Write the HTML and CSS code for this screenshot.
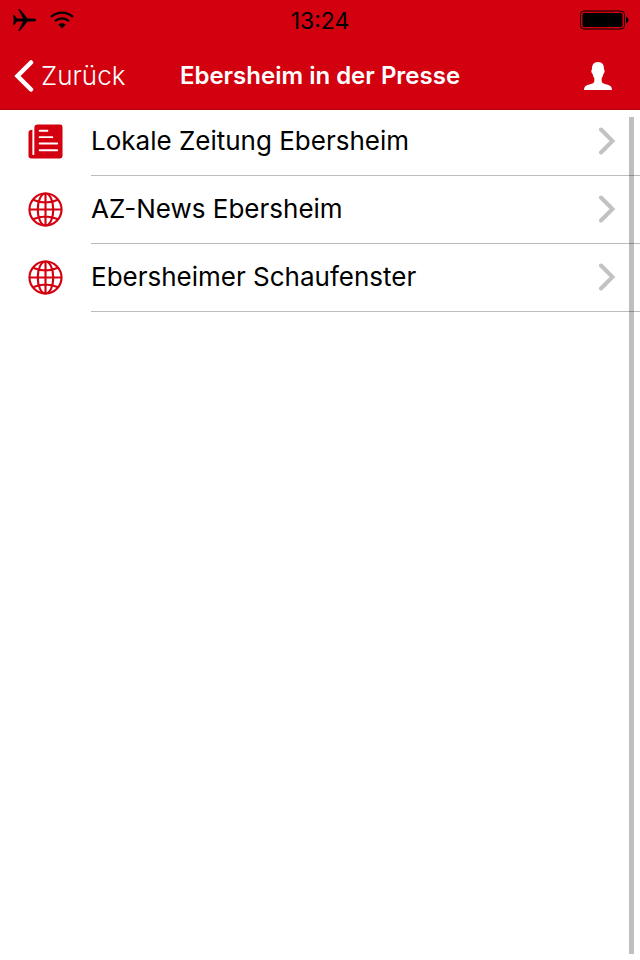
FILE: index.html
```html
<!DOCTYPE html>
<html lang="de">
<head>
<meta charset="utf-8">
<meta name="viewport" content="width=device-width, initial-scale=1">
<title>Ebersheim in der Presse</title>
<link rel="stylesheet" href="styles.css">
</head>
<body>
<svg class="sprite" aria-hidden="true">
  <symbol id="globe" viewBox="0 0 36 36">
    <g fill="none" stroke="currentColor" stroke-width="2.200">
      <circle cx="18" cy="18" r="16.500"/>
      <ellipse cx="18" cy="18" rx="8" ry="16.500"/>
      <path d="M18 2v32M2 18h32M5 8Q18 13.500 31 8M5 28Q18 22.500 31 28"/>
    </g>
  </symbol>
  <symbol id="chevron" viewBox="0 0 18 28">
    <path d="M3 2.500L14.500 14 3 25.500" fill="none" stroke="currentColor" stroke-width="4" stroke-linecap="round" stroke-linejoin="miter"/>
  </symbol>
</svg>
<header class="header">
  <div class="status">
    <div class="signals">
      <svg width="26" height="24" viewBox="0 0 26 24" role="img" aria-label="Flugmodus"><path d="M1 7h1.200L5 10.600L11 10.400L6.300 1H7.800L15.500 10.400h6.500q2.200.3 2.200 1.600t-2.200 1.600h-6.500L7.800 23H6.300L11 13.600l-6-.2L2.200 17H1l.8-5z"/></svg>
      <svg width="24" height="18" viewBox="0 0 24 18" role="img" aria-label="WLAN"><path d="M1 6Q6 1.700 12 1.700T23 6M5 10.200Q8 7.400 12 7.400T19 10.200" fill="none" stroke="#000" stroke-width="2.200"/><path d="M8.300 13.600Q12 11 15.700 13.600L12 17.500z"/></svg>
    </div>
    <time class="clock">13:24</time>
    <svg class="battery" width="50" height="20" viewBox="0 0 50 20" role="img" aria-label="Akku voll"><rect x="1.500" y="1" width="44" height="18" rx="3.500" fill="none" stroke="#000"/><rect x="3.500" y="3" width="40" height="14" rx="1.500"/><path d="M47 6.500q2.500 1 2.500 3.500t-2.500 3.500z"/></svg>
  </div>
  <nav class="nav">
    <a class="back" href="#">
      <svg width="20" height="32" viewBox="0 0 20 32" aria-hidden="true"><path d="M17 2.500L3.500 16 17 29.500" fill="none" stroke="currentColor" stroke-width="4.500" stroke-linecap="round"/></svg>
      Zurück
    </a>
    <h1 class="title">Ebersheim in der Presse</h1>
    <button class="profile" type="button" aria-label="Profil">
      <svg width="28" height="30" viewBox="0 0 28 30" aria-hidden="true"><path d="M14 1c4.500 0 6.200 3 6 7.500 1 .2.900 3-.6 4.500-.4 2-1 3.200-1.700 4v3.500c.4 1.800 2.800 2.500 5 3.100 3.600 1 5 1.800 5.300 5.400H0c.3-3.600 1.700-4.400 5.300-5.400 2.200-.6 4.600-1.300 5-3.100V17c-.7-.8-1.300-2-1.700-4-1.500-1.500-1.600-4.300-.6-4.500C7.800 4 9.500 1 14 1z" fill="currentColor"/></svg>
    </button>
  </nav>
</header>
<main class="content">
  <ul class="list">
    <li><a class="row" href="#">
      <svg class="icon" viewBox="0 0 36 36" aria-hidden="true"><path d="M10 .5h23q2.500 0 2.500 2.500v30q0 2.500-2.500 2.500H3Q.5 35.500.5 33V9q0-3 4-3v25q0 1 1 1t1-1V4Q6.500.5 10 .5z" fill="currentColor"/><path d="M12 7h8M12 13.500h13M12 20h18M12 27h18" fill="none" stroke="#fff" stroke-width="2" stroke-linecap="round"/></svg>
      <span class="cell">Lokale Zeitung Ebersheim<svg class="chevron" aria-hidden="true"><use href="#chevron"/></svg></span>
    </a></li>
    <li><a class="row" href="#">
      <svg class="icon" aria-hidden="true"><use href="#globe"/></svg>
      <span class="cell">AZ-News Ebersheim<svg class="chevron" aria-hidden="true"><use href="#chevron"/></svg></span>
    </a></li>
    <li><a class="row" href="#">
      <svg class="icon" aria-hidden="true"><use href="#globe"/></svg>
      <span class="cell">Ebersheimer Schaufenster<svg class="chevron" aria-hidden="true"><use href="#chevron"/></svg></span>
    </a></li>
  </ul>
  <div class="scrollbar"></div>
</main>
</body>
</html>
```
FILE: styles.css
```css
* {
  box-sizing: border-box;
}

body {
  margin: 0;
  min-height: 100vh;
  display: flex;
  flex-direction: column;
  background: #fff;
  color: #000;
  font-family: Inter, "Liberation Sans", sans-serif;
  font-size: 26px;
  line-height: 32px;
}

svg {
  display: block;
  flex: none;
}

.sprite {
  position: absolute;
  width: 0;
  height: 0;
}

.header {
  position: relative;
  z-index: 1;
  background: #d3000f;
  border-bottom: 1px solid #b9000d;
}

.status,
.nav {
  display: grid;
  grid-template-columns: 1fr auto 1fr;
  align-items: center;
}

.status {
  height: 40px;
  padding: 0 11px;
}

.signals {
  display: flex;
  align-items: center;
  gap: 12px;
  padding-left: 1px;
}

.clock {
  padding-top: 2px;
  font-size: 23px;
  line-height: 28px;
}

.battery,
.profile {
  justify-self: end;
}

.nav {
  height: 69px;
  padding: 2px 14px 0;
  color: #fff;
}

.back {
  display: flex;
  align-items: center;
  gap: 7px;
  color: inherit;
  text-decoration: none;
  font-weight: 300;
}

.title {
  margin: 0;
  font-size: 24px;
  font-weight: 600;
}

.profile {
  margin-right: 14px;
  padding: 0;
  border: 0;
  background: none;
  color: inherit;
}

.content {
  position: relative;
  flex: 1;
  margin-top: -2px;
}

.list {
  margin: 0;
  padding: 0;
  list-style: none;
}

.row {
  display: flex;
  align-items: center;
  gap: 28px;
  padding-left: 28px;
  color: inherit;
  text-decoration: none;
}

.icon {
  width: 35px;
  height: 35px;
  margin-bottom: 1px;
  color: #d3000f;
}

.cell {
  flex: 1;
  display: flex;
  align-items: center;
  justify-content: space-between;
  height: 68px;
  padding: 0 24px 1px 0;
  border-bottom: 1px solid #bcbbc0;
}

.chevron {
  width: 18px;
  height: 28px;
  color: #c2c2c2;
}

.scrollbar {
  position: absolute;
  top: 9px;
  right: 6px;
  bottom: 6px;
  width: 5px;
  background: rgba(0, 0, 0, 0.25);
}
```
